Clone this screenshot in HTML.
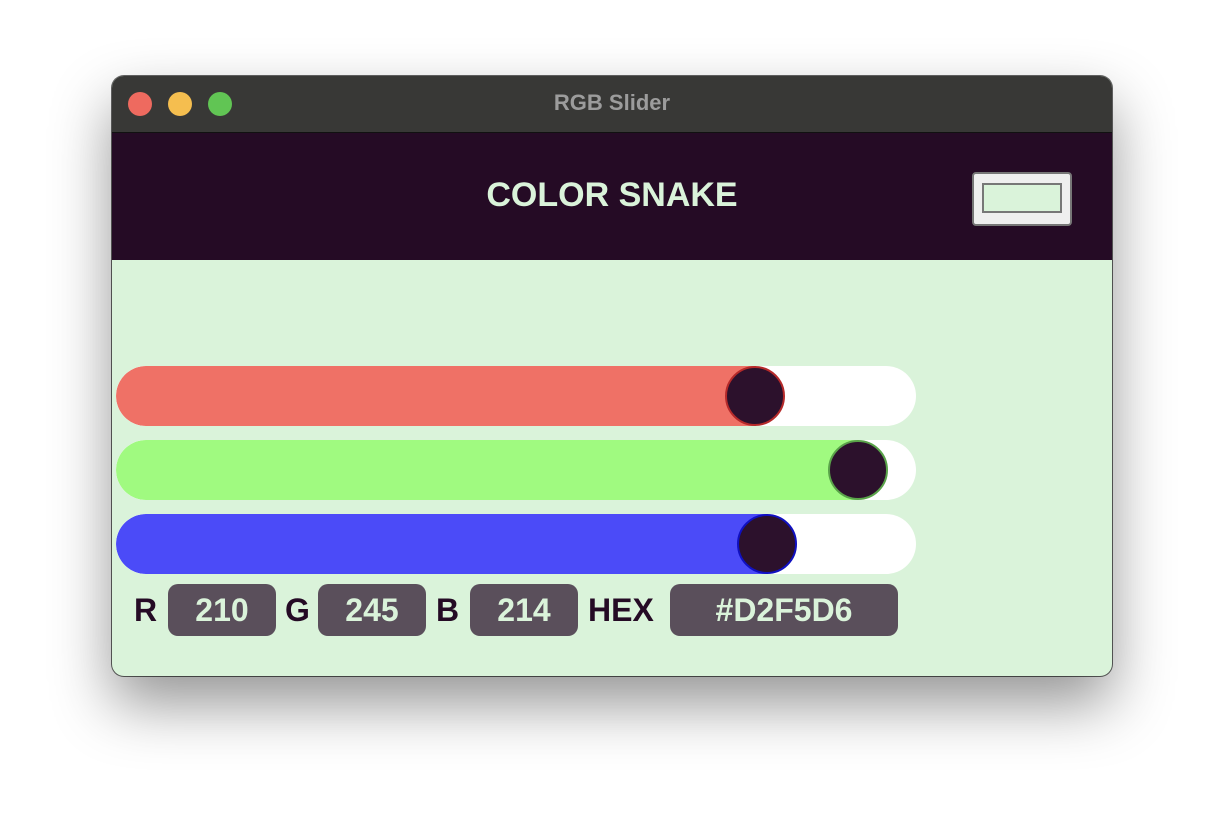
<!DOCTYPE html>
<html><head><meta charset="utf-8">
<style>
*{margin:0;padding:0;box-sizing:border-box}
body{width:1224px;height:824px;background:#fff;position:relative;font-family:"Liberation Sans",sans-serif;overflow:hidden}
.win{position:absolute;left:112px;top:76px;width:1000px;height:600px;border-radius:12px;overflow:hidden;background:#daf3da;box-shadow:0 28px 60px rgba(0,0,0,.42),0 0 0 1px rgba(0,0,0,.6)}
.tb{position:absolute;left:0;top:0;width:1000px;height:57px;background:#383836;border-bottom:1px solid #111}
.dot{position:absolute;top:16px;width:24px;height:24px;border-radius:50%}
.tt{position:absolute;left:0;right:0;top:14px;text-align:center;color:#9c9c9c;font-weight:bold;font-size:22px}
.hd{position:absolute;left:0;top:57px;width:1000px;height:127px;background:#250b25}
.ht{position:absolute;left:0;right:0;top:43px;text-align:center;color:#daf3da;font-weight:900;font-size:34px;letter-spacing:0px}
.sw{position:absolute;left:860px;top:39px;width:100px;height:54px;background:#efefef;border:2px solid #777;border-radius:4px}
.sw div{position:absolute;left:8px;top:9px;width:80px;height:30px;background:#daf3da;border:2px solid #777}
.tr{position:absolute;left:4px;width:800px;height:60px;background:#fff;border-radius:30px;overflow:hidden}
.fill{position:absolute;left:0;top:0;height:60px;border-radius:30px 0 0 30px}
.kn{position:absolute;width:60px;height:60px;border-radius:50%;background:#2c112c}
.lb{position:absolute;top:508px;height:52px;font-weight:900;font-size:32px;line-height:52px;color:#250b25}
.bx{position:absolute;top:508px;height:52px;background:#5a4f5b;border-radius:10px;color:#daf3da;font-weight:900;font-size:32px;line-height:52px;text-align:center}
</style></head><body>
<div class="win">
 <div class="tb">
  <div class="dot" style="left:16px;background:#ee6a5f"></div>
  <div class="dot" style="left:56px;background:#f5be4f"></div>
  <div class="dot" style="left:96px;background:#61c554"></div>
  <div class="tt">RGB Slider</div>
 </div>
 <div class="hd"><div class="ht">COLOR SNAKE</div><div class="sw"><div></div></div></div>
 <div class="tr" style="top:290px"><div class="fill" style="width:640px;background:#ef7166"></div></div>
 <div class="kn" style="left:613px;top:290px;border:2px solid #b52a2a"></div>
 <div class="tr" style="top:364px"><div class="fill" style="width:742px;background:#a0fa80"></div></div>
 <div class="kn" style="left:716px;top:364px;border:2px solid #5aa34a"></div>
 <div class="tr" style="top:438px"><div class="fill" style="width:652px;background:#4b4bf8"></div></div>
 <div class="kn" style="left:625px;top:438px;border:2px solid #1010c0"></div>
 <div class="lb" style="left:22px">R</div>
 <div class="bx" style="left:56px;width:108px">210</div>
 <div class="lb" style="left:173px">G</div>
 <div class="bx" style="left:206px;width:108px">245</div>
 <div class="lb" style="left:324px">B</div>
 <div class="bx" style="left:358px;width:108px">214</div>
 <div class="lb" style="left:476px">HEX</div>
 <div class="bx" style="left:558px;width:228px">#D2F5D6</div>
</div>
</body></html>
